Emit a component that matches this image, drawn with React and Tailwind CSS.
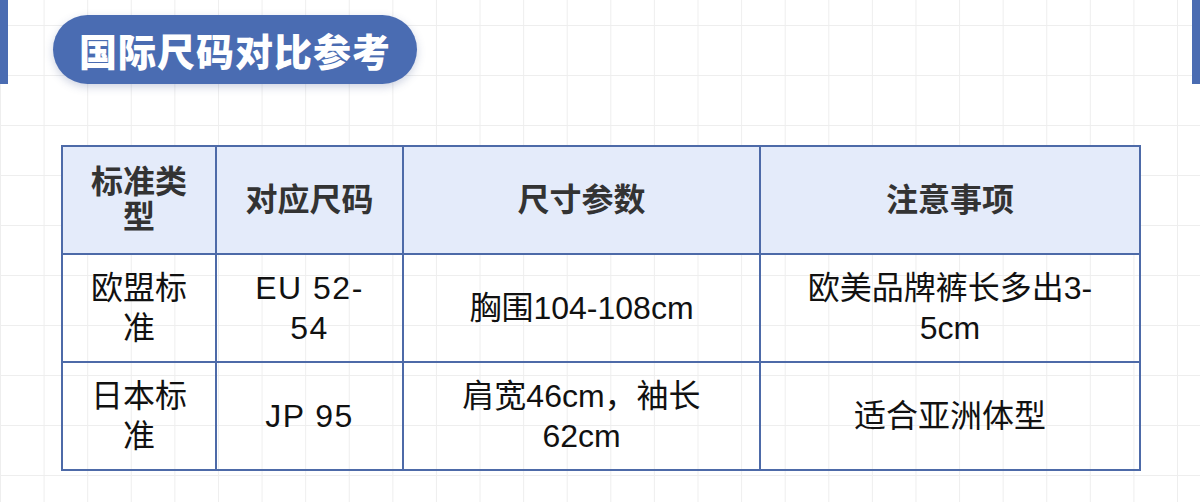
export default function App() {
  const rows = [
    {
      type: <>欧盟标<br />准</>,
      size: <>EU 52-<br />54</>,
      params: "胸围104-108cm",
      note: <>欧美品牌裤长多出3-<br />5cm</>,
    },
    {
      type: <>日本标<br />准</>,
      size: "JP 95",
      params: <>肩宽46cm，袖长<br />62cm</>,
      note: "适合亚洲体型",
    },
  ];

  return (
    <div
      className="relative w-full h-[502px] overflow-hidden bg-white bg-[linear-gradient(to_right,#eeeeee_1px,transparent_1px),linear-gradient(to_bottom,#eeeeee_1px,transparent_1px)] bg-[size:43.6px_50px] bg-[position:0_25px]"
      style={{ fontFamily: '"Liberation Sans", "Noto Sans CJK SC", sans-serif' }}
    >
      {/* title row */}
      <div className="flex items-start">
        <div className="w-2 h-[84px] bg-[#4a6cb2]" />
        <div className="ml-[45px] mt-[15px] h-[69px] w-[364px] rounded-full bg-[#4a6cb2] shadow-[0_3px_8px_rgba(60,80,140,0.25)] flex items-center justify-center">
          <span
            className="text-white text-[38px] font-black tracking-[1px] leading-none"
            style={{ fontFamily: '"Noto Sans CJK SC", sans-serif' }}
          >
            国际尺码对比参考
          </span>
        </div>
        <div className="flex-1" />
        <div className="w-2 h-[84px] bg-[#4a6cb2]" />
      </div>

      {/* size table */}
      <table className="ml-[61px] mt-[61px] w-[1078px] table-fixed border-collapse border-2 border-[#4d6aa8] text-center">
        <colgroup>
          <col className="w-[154px]" />
          <col className="w-[187px]" />
          <col className="w-[357px]" />
          <col className="w-[380px]" />
        </colgroup>
        <thead>
          <tr className="h-[108px] bg-[#e4ebfa] text-[#333333] text-[32px] font-bold leading-[35px]">
            <th className="border-2 border-[#4d6aa8] px-3">标准类<br />型</th>
            <th className="border-2 border-[#4d6aa8] px-3">对应尺码</th>
            <th className="border-2 border-[#4d6aa8] px-3">尺寸参数</th>
            <th className="border-2 border-[#4d6aa8] px-3">注意事项</th>
          </tr>
        </thead>
        <tbody>
          {rows.map((r, i) => (
            <tr key={i} className="h-[108px] text-[#111111] text-[32px] leading-[40px]">
              <td className="border-2 border-[#4d6aa8] px-3">{r.type}</td>
              <td className="border-2 border-[#4d6aa8] px-3 tracking-[1.5px]">{r.size}</td>
              <td className="border-2 border-[#4d6aa8] px-3">{r.params}</td>
              <td className="border-2 border-[#4d6aa8] px-3">{r.note}</td>
            </tr>
          ))}
        </tbody>
      </table>
    </div>
  );
}
